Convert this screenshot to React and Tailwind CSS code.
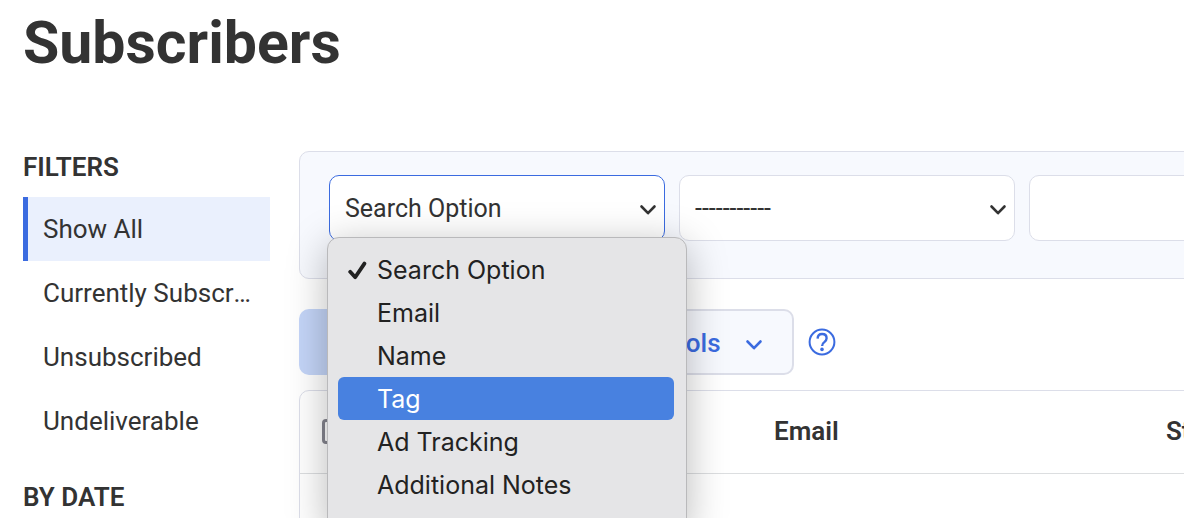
import { useState } from "react";
import clsx from "clsx";

const filters = ["Show All", "Currently Subscribed", "Unsubscribed", "Undeliverable"];

const searchOptions = [
  "Search Option",
  "Email",
  "Name",
  "Tag",
  "Ad Tracking",
  "Additional Notes",
];

const Chevron = ({ className }) => (
  <svg
    viewBox="0 0 18 12"
    fill="none"
    stroke="currentColor"
    strokeWidth="2.6"
    strokeLinecap="round"
    strokeLinejoin="round"
    className={className}
    aria-hidden="true"
  >
    <path d="M2.5 2.5 9 9.2l6.5-6.7" />
  </svg>
);

const CheckMark = () => (
  <svg
    viewBox="0 0 20 20"
    fill="none"
    stroke="currentColor"
    strokeWidth="3.8"
    strokeLinecap="round"
    strokeLinejoin="round"
    className="h-5 w-5"
    aria-hidden="true"
  >
    <path d="M3.2 10.8 8.2 16.2 17.4 2.6" />
  </svg>
);

const HelpIcon = () => (
  <svg viewBox="0 0 28 28" fill="none" className="h-7 w-7" aria-hidden="true">
    <circle cx="14" cy="14" r="12.4" stroke="currentColor" strokeWidth="2" />
    <path
      d="M9.6 10.6C9.7 7.8 11.5 6 14.1 6c2.7 0 4.5 1.7 4.5 4.2 0 1.7-.9 2.8-2.3 3.9-1.5 1.1-2.2 1.9-2.2 3.9"
      stroke="currentColor"
      strokeWidth="2.4"
    />
    <circle cx="14" cy="21.4" r="1.8" fill="currentColor" />
  </svg>
);

const SearchSelect = ({ label, options, active, children }) => (
  <div className="relative w-[336px] shrink-0">
    <select
      aria-label={label}
      className={clsx(
        "h-[66px] w-full appearance-none rounded-[10px] border bg-white px-[15px] pt-0.5 text-[25px] outline-none",
        active ? "border-[#3b6be0]" : "border-[#dcdee9]"
      )}
    >
      {options.map((option) => (
        <option key={option}>{option}</option>
      ))}
    </select>
    <Chevron className="pointer-events-none absolute right-2 top-[29px] h-3 w-[18px]" />
    {children}
  </div>
);

const OptionsMenu = ({ selected, onSelect }) => (
  <ul
    role="listbox"
    aria-label="Search options"
    className="absolute -left-0.5 top-[62px] z-10 w-[360px] rounded-xl border border-[#b9b9bb] bg-[#e5e5e7] pb-6 pl-2.5 pr-3 pt-2.5 font-[Inter,sans-serif] text-[#222] shadow-[0_8px_40px_rgba(0,0,0,0.28)]"
  >
    {searchOptions.map((option) => (
      <li key={option}>
        <button
          type="button"
          role="option"
          aria-selected={option === selected}
          onClick={() => onSelect(option)}
          className={clsx(
            "flex h-[43px] w-full items-center rounded-md pl-[9px] pt-0.5 text-left text-[25px]",
            option === "Tag" && "bg-[#4881e0] text-white"
          )}
        >
          <span className="w-[30px]">{option === selected && <CheckMark />}</span>
          {option}
        </button>
      </li>
    ))}
  </ul>
);

const Sidebar = () => (
  <aside className="w-[247px] shrink-0">
    <h2 className="mb-3.5 text-[26px] font-semibold leading-8">FILTERS</h2>
    <nav>
      {filters.map((filter, index) => (
        <a
          key={filter}
          href="#"
          className={clsx(
            "block truncate border-l-[5px] px-[15px] text-[26px] leading-[64px]",
            index === 0 ? "border-[#3b6be0] bg-[#eaf0fd]" : "border-transparent"
          )}
        >
          {filter}
        </a>
      ))}
    </nav>
    <h2 className="mt-7 text-[26px] font-semibold leading-8">BY DATE</h2>
  </aside>
);

const App = () => {
  const [selected, setSelected] = useState("Search Option");

  return (
    <div className="h-screen overflow-hidden bg-white pl-[23px] pt-[11px] font-[Roboto,sans-serif] text-[#333]">
      <h1 className="text-[59px] font-bold leading-[64px]">Subscribers</h1>

      <div className="mt-[76px] flex gap-[29px]">
        <Sidebar />

        <main className="min-w-[1100px] flex-1">
          {/* Search */}
          <form className="flex gap-3.5 rounded-[10px] border border-[#dcdee9] bg-[#f7f9fe] px-[29px] pb-[37px] pt-[23px]">
            <SearchSelect label="Search field" options={searchOptions} active>
              <OptionsMenu selected={selected} onSelect={setSelected} />
            </SearchSelect>
            <SearchSelect label="Condition" options={["-----------"]} />
            <input
              type="text"
              aria-label="Search value"
              className="h-[66px] min-w-0 flex-1 rounded-[10px] border border-[#dcdee9] bg-white px-[15px] text-[25px]"
            />
          </form>

          {/* Actions */}
          <div className="mt-[30px] flex items-center gap-3.5">
            <button
              type="button"
              disabled
              aria-label="Apply"
              className="h-[66px] w-[318px] rounded-[10px] bg-[#c4d5f8]"
            />
            <button
              type="button"
              className="flex h-[66px] items-center gap-6 rounded-[10px] border-2 border-[#dcdee9] bg-[#f7f9fe] pl-6 pr-[29px] pt-0.5 text-[26px] font-medium text-[#3b6be0]"
            >
              Tools
              <Chevron className="mt-1 h-3 w-[18px]" />
            </button>
            <button type="button" aria-label="Help" className="text-[#3b6be0]">
              <HelpIcon />
            </button>
          </div>

          {/* Subscribers */}
          <div className="mt-[15px] rounded-[10px] border border-[#dcdee9] bg-white">
            <table className="w-full table-fixed text-left text-[26px]">
              <thead>
                <tr className="h-[82px] border-b border-[#dcdee0]">
                  <th className="w-[81px] pl-[22px]">
                    <input
                      type="checkbox"
                      aria-label="Select all subscribers"
                      className="block h-[25px] w-[25px] appearance-none rounded border-[3px] border-[#85858f] bg-white"
                    />
                  </th>
                  <th className="w-[393px]" aria-label="Name" />
                  <th className="font-semibold">Email</th>
                  <th className="w-[232px] font-semibold">Status</th>
                </tr>
              </thead>
              <tbody>
                <tr className="h-[83px]">
                  <td colSpan={4} />
                </tr>
              </tbody>
            </table>
          </div>
        </main>
      </div>
    </div>
  );
};

export default App;
